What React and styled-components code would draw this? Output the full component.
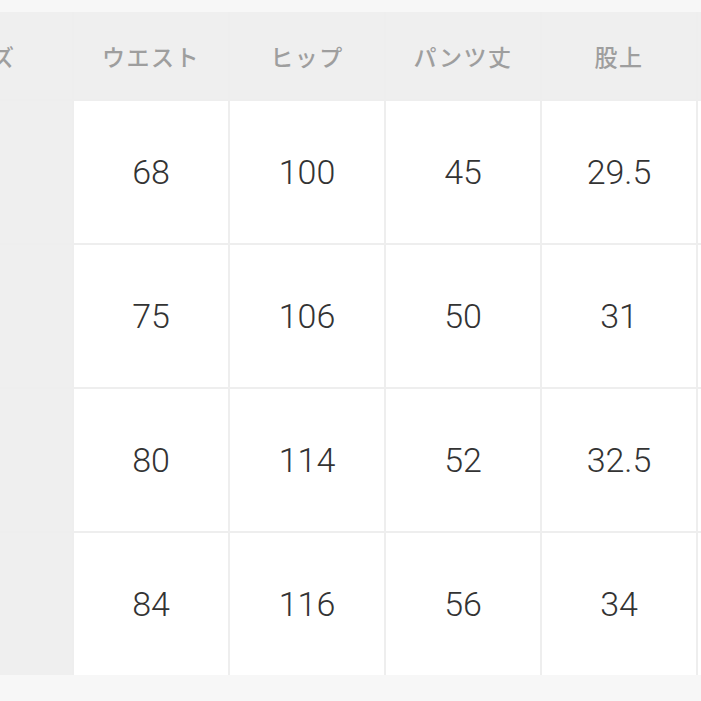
import React from 'react';
import styled, { createGlobalStyle } from 'styled-components';

const GlobalStyle = createGlobalStyle`
    html, body {
        margin: 0;
        padding: 0;
        background: #f7f7f7;
    }
`

const headers = ['サイズ', 'ウエスト', 'ヒップ', 'パンツ丈', '股上', '裾幅'];

const rows = [
    ['S', '68', '100', '45', '29.5', '20'],
    ['M', '75', '106', '50', '31', '21'],
    ['L', '80', '114', '52', '32.5', '22'],
    ['XL', '84', '116', '56', '34', '23'],
];

export default function App() {
    return (
        <>
            <GlobalStyle />
            <Page>
                <Viewport>
                    <Table>
                        {headers.map((h) => (
                            <HeadCell key={h}>{h}</HeadCell>
                        ))}
                        {rows.map((row) =>
                            row.map((v, i) =>
                                i === 0 ? (
                                    <LabelCell key={row[0] + i}>{v}</LabelCell>
                                ) : (
                                    <ValueCell key={row[0] + i}>{v}</ValueCell>
                                )
                            )
                        )}
                    </Table>
                </Viewport>
            </Page>
        </>
    );
}

const Page = styled.div`
    width: 701px;
    height: 701px;
    padding-top: 12px;
    box-sizing: border-box;
    background: #f7f7f7;
    overflow: hidden;
`

const Viewport = styled.div`
    width: 701px;
    overflow: hidden;
`

const Table = styled.div`
    display: grid;
    grid-template-columns: 186px repeat(5, 154px);
    grid-template-rows: 87px repeat(4, 142px);
    gap: 2px;
    margin-left: -114px;
    width: max-content;
    background: #eeeeee;
`

const HeadCell = styled.div`
    display: flex;
    align-items: center;
    justify-content: center;
    background: #efefef;
    color: #9e9e9e;
    font-family: "Noto Sans CJK JP", "Noto Sans", sans-serif;
    font-weight: 500;
    font-size: 23px;
    letter-spacing: 1.5px;
`

const LabelCell = styled.div`
    display: flex;
    align-items: center;
    justify-content: center;
    background: #efefef;
    color: #9e9e9e;
    font-family: "Noto Sans CJK JP", sans-serif;
    font-weight: 500;
    font-size: 23px;
`

const ValueCell = styled.div`
    display: flex;
    align-items: center;
    justify-content: center;
    background: #ffffff;
    color: #333333;
    font-family: Roboto, "Liberation Sans", sans-serif;
    font-weight: 300;
    font-size: 34px;
`
